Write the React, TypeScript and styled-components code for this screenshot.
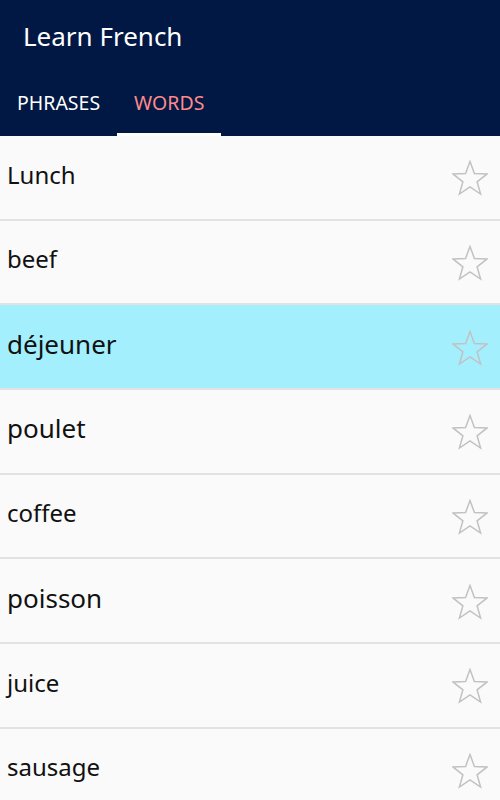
import { createGlobalStyle, styled } from "styled-components";

const GlobalStyle = createGlobalStyle`
  body {
    margin: 0;
    background: #fafafa;
    font-family: "Noto Sans", "Open Sans", sans-serif;
  }
`;

interface wordItem {
  text: string;
  french?: boolean;
  active?: boolean;
}

const words: wordItem[] = [
  { text: "Lunch" },
  { text: "beef" },
  { text: "déjeuner", french: true, active: true },
  { text: "poulet", french: true },
  { text: "coffee" },
  { text: "poisson", french: true },
  { text: "juice" },
  { text: "sausage" },
];

const StarIcon = () => (
  <svg width="36" height="36" viewBox="0 0 36 36">
    <polygon
      points="18,1.5 22.4,13.4 35.1,13.9 25.1,21.8 28.6,34.1 18,27 7.4,34.1 10.9,21.8 0.9,13.9 13.6,13.4"
      fill="none"
      stroke="#c2c2c2"
      strokeWidth="1.5"
      strokeLinejoin="miter"
    />
  </svg>
);

const App = () => {
  return (
    <Page>
      <GlobalStyle />
      <Header>
        <Title>Learn French</Title>
        <TabBar>
          <Tab>PHRASES</Tab>
          <Tab $selected>WORDS</Tab>
        </TabBar>
      </Header>
      <WordList>
        {words.map((w) => (
          <WordRow key={w.text} $active={w.active}>
            <WordText $french={w.french}>{w.text}</WordText>
            <StarButton>
              <StarIcon />
            </StarButton>
          </WordRow>
        ))}
      </WordList>
    </Page>
  );
};
export default App;

const Page = styled.div`
  width: 500px;
  height: 800px;
  overflow: hidden;
  background: #fafafa;
`;

const Header = styled.header`
  background-color: #001843;
  display: flex;
  flex-direction: column;
  height: 136px;
`;

const Title = styled.h1`
  margin: 0;
  height: 72px;
  box-sizing: border-box;
  padding: 18px 0 0 23px;
  color: #ffffff;
  font-size: 26px;
  font-weight: 400;
`;

const TabBar = styled.nav`
  display: flex;
  flex: 1;
`;

const Tab = styled.div<{ $selected?: boolean }>`
  display: flex;
  align-items: center;
  padding: 0 17px 1px;
  box-sizing: border-box;
  color: ${({ $selected }) => ($selected ? "#ff8a8a" : "#ffffff")};
  font-size: 19.5px;
  border-bottom: 3px solid
    ${({ $selected }) => ($selected ? "#ffffff" : "transparent")};
`;

const WordList = styled.ul`
  list-style: none;
  margin: 0;
  padding: 0;
`;

const WordRow = styled.li<{ $active?: boolean }>`
  display: flex;
  justify-content: space-between;
  align-items: center;
  height: 84.67px;
  box-sizing: border-box;
  padding: 0 12px 0 7px;
  border-bottom: 2px solid #e2e2e2;
  background-color: ${({ $active }) => ($active ? "#a3effd" : "#fafafa")};
`;

const WordText = styled.span<{ $french?: boolean }>`
  color: #111111;
  font-size: ${({ $french }) => ($french ? "26px" : "24px")};
  margin-top: -6px;
`;

const StarButton = styled.div`
  display: flex;
  align-items: center;
  margin-top: 2px;
`;
